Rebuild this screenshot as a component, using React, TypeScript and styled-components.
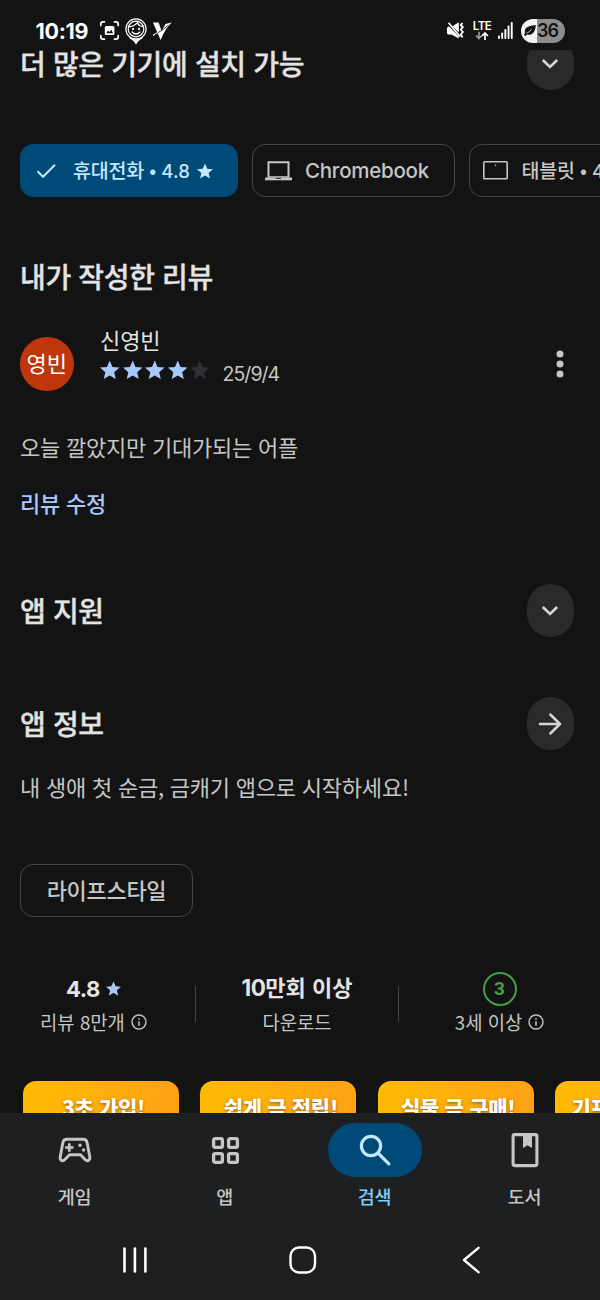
import React from 'react';
import styled, { createGlobalStyle } from 'styled-components';

const GlobalStyle = createGlobalStyle`
  * { box-sizing: border-box; }
  body {
    margin: 0;
    background: #131313;
    color: #e3e3e3;
    font-family: 'Noto Sans CJK KR', sans-serif;
  }
  svg { display: block; flex: none; overflow: visible; }
`;

const LATIN = `Inter, 'Noto Sans CJK KR', sans-serif`;

const Screen = styled.div`
  width: 600px;
  height: 1300px;
  display: flex;
  flex-direction: column;
  overflow: hidden;
`;

const StatusBar = styled.header`
  height: 50px;
  flex: none;
  display: flex;
  align-items: center;
  padding: 11px 35px 0 35.5px;
  color: #fff;
`;

const Clock = styled.span`
  width: 64.5px;
  font: 700 21.5px/24px ${LATIN};
  letter-spacing: -0.3px;
  white-space: nowrap;
`;

const StatusIcons = styled.div`
  display: flex;
  align-items: center;
`;

const StatusRight = styled(StatusIcons)`
  margin-left: auto;
`;

const Network = styled.div`
  width: 20px;
  margin: 0 6px 0 7px;
  display: flex;
  flex-direction: column;
  align-items: center;
  font: 600 11.5px/10px ${LATIN};
  letter-spacing: -0.5px;
`;

const Battery = styled.div`
  width: 44px;
  height: 24px;
  margin-left: 8px;
  border-radius: 12px;
  display: flex;
  align-items: center;
  background: linear-gradient(90deg, #f2f2f2 16px, #8d8d8d 16px);
  color: #131313;
  font: 600 18px/24px ${LATIN};
  letter-spacing: -0.9px;
`;

const Content = styled.main`
  flex: 1;
  min-height: 0;
  overflow: hidden;
`;

const SectionHeader = styled.div<{ $top: number; $h?: number }>`
  height: ${(p) => p.$h ?? 53}px;
  margin-top: ${(p) => p.$top}px;
  padding: 0 26.500px 0 20px;
  display: flex;
  align-items: center;
  justify-content: space-between;
`;

const Heading = styled.h2`
  margin: 0;
  padding-bottom: 2px;
  font-size: 28px;
  line-height: 38px;
  font-weight: 500;
  letter-spacing: -0.35px;
  -webkit-text-stroke: 0.35px currentColor;
  white-space: nowrap;
`;

const RoundButton = styled.button`
  width: 46.5px;
  height: 53px;
  padding: 0;
  border: 0;
  border-radius: 24px;
  display: grid;
  place-items: center;
  background: #282a2c;
  color: #d5d6d5;
`;

const ChipRow = styled.div`
  display: flex;
  gap: 14px;
  margin-top: 54px;
  padding-left: 20px;
`;

const Chip = styled.div<{ $w: number; $pad: number; $selected?: boolean }>`
  flex: none;
  width: ${(p) => p.$w}px;
  height: 53px;
  padding-left: ${(p) => p.$pad}px;
  border-radius: 13px;
  border: 1.5px solid ${(p) => (p.$selected ? '#004a77' : '#444746')};
  background: ${(p) => (p.$selected ? '#004a77' : 'transparent')};
  color: ${(p) => (p.$selected ? '#c2e7ff' : '#c4c7c5')};
  display: flex;
  align-items: center;
  font-size: 19.5px;
  font-weight: 500;
  letter-spacing: -0.2px;
  white-space: nowrap;
`;

const Latin = styled.span<{ $size?: number; $track?: number }>`
  font-family: ${LATIN};
  font-size: ${(p) => (p.$size ? `${p.$size}px` : 'inherit')};
  letter-spacing: ${(p) => p.$track ?? 0}px;
`;

const ChipLabel = styled.span<{ $left: number }>`
  margin-left: ${(p) => p.$left}px;
  margin-right: 7px;
  line-height: 28px;
`;

const Review = styled.div`
  height: 66px;
  margin-top: 28px;
  padding: 0 36px 0 20px;
  display: flex;
  align-items: flex-start;
`;

const Avatar = styled.div`
  width: 53.5px;
  height: 53.5px;
  margin-top: 12px;
  border-radius: 50%;
  background: #bf360c;
  color: #fff;
  text-align: center;
  font-size: 22px;
  line-height: 51px;
`;

const ReviewMeta = styled.div`
  flex: 1;
  margin-left: 26.5px;
`;

const Name = styled.div`
  font-size: 22px;
  line-height: 29px;
  letter-spacing: -0.1px;
`;

const Rating = styled.div`
  display: flex;
  align-items: center;
  gap: 3.1px;
  height: 31px;
`;

const ReviewDate = styled.span`
  margin: 8px 0 0 9.5px;
  color: #c4c7c5;
  font: 400 19.5px/24px ${LATIN};
  letter-spacing: -0.95px;
`;

const MenuButton = styled.div`
  margin-top: 25px;
`;

const Paragraph = styled.p<{ $top: number; $link?: boolean }>`
  margin: ${(p) => p.$top}px 0 0 20px;
  font-size: 22px;
  line-height: 30px;
  letter-spacing: -0.22px;
  font-weight: ${(p) => (p.$link ? 500 : 400)};
  color: ${(p) => (p.$link ? '#a8c7fa' : '#c4c7c5')};
  white-space: nowrap;
`;

const Tag = styled.div`
  width: 173px;
  height: 53px;
  margin: 63px 0 0 20px;
  border: 1.5px solid #444746;
  border-radius: 13px;
  text-align: center;
  color: #c4c7c5;
  font-size: 22px;
  font-weight: 500;
  letter-spacing: -0.3px;
  line-height: 49px;
`;

const Stats = styled.div`
  display: grid;
  grid-template-columns: 196px 203px 201px;
  margin-top: 54px;
  height: 68px;
`;

const Stat = styled.div<{ $shift?: number; $divided?: boolean }>`
  display: flex;
  flex-direction: column;
  align-items: center;
  padding-right: ${(p) => p.$shift ?? 0}px;
  background: ${(p) =>
    p.$divided ? 'linear-gradient(#444746, #444746) right 15px / 1.5px 36px no-repeat' : 'none'};
`;

const StatValue = styled.div`
  height: 35px;
  display: flex;
  align-items: center;
  gap: 6px;
  font-size: 22px;
  line-height: 30px;
  font-weight: 700;
  white-space: nowrap;
`;

const Downloads = styled.span`
  padding-bottom: 3px;
`;

const StatLabel = styled.div`
  height: 32px;
  display: flex;
  align-items: center;
  gap: 6px;
  color: #c4c7c5;
  font-size: 18.8px;
  line-height: 28px;
  white-space: nowrap;
`;

const StatText = styled.span`
  padding-bottom: 1px;
`;

const AgeBadge = styled.div`
  width: 34px;
  height: 34px;
  border: 2.5px solid #43a047;
  border-radius: 50%;
  color: #43a047;
  text-align: center;
  font: 700 19px/30px Roboto, sans-serif;
`;

const Shots = styled.div`
  display: flex;
  gap: 21.3px;
  margin-top: 42px;
  padding-left: 23px;
`;

const Shot = styled.div`
  flex: none;
  width: 156px;
  height: 280px;
  padding: 11px 0 0 5px;
  border-radius: 13px;
  background: linear-gradient(105deg, #ffb905 10%, #ff981c 95%);
  color: #fff;
  text-align: center;
  font-size: 21px;
  line-height: 30px;
  font-weight: 900;
  letter-spacing: -0.3px;
  text-shadow: 0 1px 3px rgba(110, 55, 0, 0.75);
  white-space: nowrap;
`;

const BottomArea = styled.footer`
  flex: none;
  height: 187px;
  background: #1e1f20;
`;

const Tabs = styled.nav`
  display: grid;
  grid-template-columns: repeat(4, 150px);
  padding-top: 10px;
`;

const Tab = styled.div<{ $active?: boolean }>`
  display: flex;
  flex-direction: column;
  align-items: center;
  color: ${(p) => (p.$active ? '#7fcfff' : '#c4c7c5')};
  font-size: 18.5px;
  font-weight: 500;
  letter-spacing: -0.3px;
  line-height: 28px;
`;

const TabLabel = styled.span`
  padding-right: 1px;
`;

const TabIcon = styled.div<{ $active?: boolean }>`
  width: 94px;
  height: 54px;
  margin-bottom: 5px;
  border-radius: 27px;
  display: grid;
  place-items: center;
  background: ${(p) => (p.$active ? '#004a77' : 'transparent')};
  color: ${(p) => (p.$active ? '#c2e7ff' : '#c4c7c5')};
`;

const SystemNav = styled.div`
  display: flex;
  align-items: center;
  height: 40px;
  margin-top: 30px;
  padding-left: 121px;
`;

const Star = ({ size = 19.5, color = 'currentColor' }: { size?: number; color?: string }) => (
  <svg width={size} height={size} viewBox="2 2 20 19" fill={color}>
    <path d="M12 17.27 18.18 21l-1.64-7.03L22 9.24l-7.19-.61L12 2 9.19 8.63 2 9.24l5.46 4.73L5.82 21z" />
  </svg>
);

const Info = () => (
  <svg width="16" height="16" viewBox="0 0 16 16" fill="none" stroke="currentColor" strokeWidth="1.4">
    <circle cx="8" cy="8" r="7" />
    <path d="M8 7.2V11.8M8 4.2V5.8" strokeWidth="1.5" />
  </svg>
);

const ChevronDown = () => (
  <svg width="18" height="12" viewBox="0 0 18 12" fill="none" stroke="currentColor" strokeWidth="2.6">
    <path d="M1.8 2 9 9 16.2 2" />
  </svg>
);

const ArrowRight = () => (
  <svg width="22" height="22" viewBox="0 0 22 22" fill="none" stroke="currentColor" strokeWidth="2.5" strokeLinecap="round" strokeLinejoin="round">
    <path d="M1 11H21M11.3 1.5 21 11 11.3 20.5" />
  </svg>
);

const CaptureIcon = () => (
  <svg width="19" height="19" viewBox="0 0 19 19" fill="none" stroke="#fff" strokeWidth="1.7" strokeLinecap="round">
    <path d="M.8 4.5V3A2.2 2.2 0 0 1 3 .8H4.5M14.5.8H16A2.2 2.2 0 0 1 18.2 3V4.5M18.2 14.5V16A2.2 2.2 0 0 1 16 18.2H14.5M4.5 18.2H3A2.2 2.2 0 0 1 .8 16V14.5" />
    <rect x="4.8" y="5" width="9.6" height="9" rx="1.6" fill="#fff" stroke="none" />
    <path d="M6.3 12.2 8 9.4 9.6 11 11.4 8.7 13 12.2Z" fill="#131313" stroke="none" />
  </svg>
);

const FacePinIcon = () => (
  <svg width="22" height="26" viewBox="0 0 22 26" fill="none" stroke="#fff" strokeWidth="1.2" strokeLinecap="round">
    <circle cx="11" cy="11" r="10.1" />
    <circle cx="11" cy="11" r="7.8" />
    <path d="M4.5 19.5Q9 22 11 25.5 13 22 17.5 19.5 11 22.8 4.5 19.5Z" fill="#fff" />
    <path d="M4.5 8.8Q9 8.5 12.5 4.7 13.5 7.5 17.2 8.7M7 14Q11 18 15 14" />
    <path d="M8 10.8V11.3M14 10.8V11.3" strokeWidth="1.9" />
  </svg>
);

const CheckVIcon = () => (
  <svg width="19" height="18" viewBox="0 0 19 18" fill="#fff">
    <path d="M0 .5H5.600L8.600 9 12.500 2 18.800.5Q12.500 6 7.600 18Z" />
    <path d="M2.500 12Q10 8.500 15.500 3" fill="none" stroke="#131313" strokeWidth=".8" />
    <path d="M0 13.500Q2.500 11.300 5 10.500" fill="none" stroke="#fff" strokeWidth="1.2" />
  </svg>
);

const MuteIcon = () => (
  <svg width="18" height="17" viewBox="0 0 18 17">
    <path d="M0 5.800 2 4.300 11.800 14.500V16.500L4.500 12.500H1.200L0 11.500Z" fill="#fff" />
    <path d="M5.500 4.300 11.800.3V10.600Z" fill="#fff" />
    <path d="M1.500.8 13 14.500" stroke="#fff" strokeWidth="1.700" />
    <path d="M15.500 1 13.800 3 15.800 5 13.800 7.500 15.800 10 13.800 12.500 15.500 15.500" fill="none" stroke="#fff" strokeWidth="1.9" />
  </svg>
);

const DataArrows = () => (
  <svg width="14" height="9" viewBox="0 0 14 9" fill="none" strokeWidth="1.7">
    <path d="M4 .8V7.500M1 4.500 4 7.500 7 4.500" stroke="#999" />
    <path d="M10 9V2M7 5 10 2 13 5" stroke="#fff" />
  </svg>
);

const SignalIcon = () => (
  <svg width="15" height="17" viewBox="0 0 15 17" fill="#fff">
    <rect x="0" y="13.5" width="1.9" height="3.5" rx=".8" />
    <rect x="3.2" y="10.5" width="1.9" height="6.5" rx=".8" />
    <rect x="6.4" y="7" width="1.9" height="10" rx=".8" />
    <rect x="9.6" y="3.5" width="1.9" height="13.5" rx=".8" />
    <rect x="12.8" y="0" width="1.9" height="17" rx=".8" />
  </svg>
);

const Leaf = styled.svg`
  margin: 0 1px 0 3px;
`;

const LeafIcon = () => (
  <Leaf width="12" height="11" viewBox="0 0 12 11">
    <path d="M1 8C0 3 3 1 11.8 0 11.5 7 8 11 3.500 9.500L1 11 0 10Z" fill="#131313" />
    <path d="M2.500 8.300Q5.500 7 7.500 4.500" fill="none" stroke="#f2f2f2" strokeWidth=".8" />
  </Leaf>
);

const CheckIcon = () => (
  <svg width="20" height="16" viewBox="0 0 20 16" fill="none" stroke="currentColor" strokeWidth="2">
    <path d="M1.500 8.300 7 13.800 19 1.800" />
  </svg>
);

const LaptopIcon = () => (
  <svg width="27" height="20" viewBox="0 0 27 20" fill="none" stroke="currentColor" strokeWidth="2">
    <path d="M3.500 16.500V1.200H23.500V16.500" />
    <path d="M0 17.900H27" strokeWidth="2.8" />
    <path d="M11 17.300H16" stroke="#131313" strokeWidth="1" />
    <path d="M3 15.900H24" strokeWidth="1.4" />
  </svg>
);

const TabletIcon = () => (
  <svg width="25" height="19" viewBox="0 0 25 19" fill="none" stroke="currentColor" strokeWidth="1.6">
    <rect x=".8" y=".8" width="23.4" height="17" rx=".8" />
    <circle cx="12.5" cy="4.3" r=".8" fill="currentColor" stroke="none" />
  </svg>
);

const GamepadIcon = () => (
  <svg width="34" height="26" viewBox="0 0 34 26" fill="none" stroke="currentColor" strokeWidth="2.9" strokeLinejoin="round">
    <path d="M9 2.200H25C27.300 2.200 28.700 3.400 29.100 5.500L31.800 20C32.300 23.400 29.300 24.700 27.300 22.800L22.500 17.800H11.500L6.700 22.800C4.700 24.700 1.700 23.400 2.200 20L4.900 5.500C5.300 3.400 6.700 2.200 9 2.200Z" />
    <path d="M11.300 6.300V14.700M7.100 10.500H15.500" strokeWidth="2.7" />
    <circle cx="22" cy="8.2" r="1.7" fill="currentColor" stroke="none" />
    <circle cx="25.6" cy="13" r="1.7" fill="currentColor" stroke="none" />
  </svg>
);

const AppsIcon = () => (
  <svg width="27" height="27" viewBox="0 0 27 27" fill="none" stroke="currentColor" strokeWidth="3.3">
    {[1.6, 16.6].map((y) =>
      [1.6, 16.6].map((x) => <rect key={`${x}-${y}`} x={x} y={y} width="8.8" height="8.8" rx="1.6" />),
    )}
  </svg>
);

const SearchIcon = () => (
  <svg width="32" height="32" viewBox="0 0 32 32" fill="none" stroke="currentColor" strokeWidth="3.2" strokeLinecap="round">
    <circle cx="12" cy="12" r="9.6" />
    <path d="M18.900 18.900 29.800 29.800" />
  </svg>
);

const BookIcon = () => (
  <svg width="28" height="34" viewBox="0 0 28 34">
    <rect x="2.1" y="1.6" width="23.8" height="31" rx="1.5" fill="none" stroke="currentColor" strokeWidth="3.1" />
    <path d="M12 2H21V15L16.500 12.300 12 15Z" fill="currentColor" />
  </svg>
);

const RecentsIcon = () => (
  <svg width="26" height="26" viewBox="0 0 26 26" stroke="#fff" strokeWidth="2.6" strokeLinecap="round">
    <path d="M3.500 1.500V24.500M13.900 1.500V24.500M24.400 1.500V24.500" />
  </svg>
);

const SystemKey = styled.svg<{ $left: number }>`
  margin-left: ${(p) => p.$left}px;
`;

const HomeIcon = () => (
  <SystemKey $left={142} width="28" height="28" viewBox="0 0 28 28" fill="none" stroke="#fff" strokeWidth="2.4">
    <rect x="1.5" y="1.5" width="24.5" height="25" rx="8.5" />
  </SystemKey>
);

const BackIcon = () => (
  <SystemKey $left={144.5} width="18" height="28" viewBox="0 0 18 28" fill="none" stroke="#fff" strokeWidth="2.4" strokeLinecap="round" strokeLinejoin="round">
    <path d="M16.500 1.800 2 14 16.500 26.200" />
  </SystemKey>
);

const NotificationIcons = styled(StatusIcons)`
  gap: 6px;
`;

const tabs = [
  { label: '게임', icon: <GamepadIcon /> },
  { label: '앱', icon: <AppsIcon /> },
  { label: '검색', icon: <SearchIcon />, active: true },
  { label: '도서', icon: <BookIcon /> },
];

const shots = ['3초 가입!', '쉽게 금 적립!', '실물 금 구매!', '기프티콘 교환!'];

export default function App() {
  return (
    <Screen lang="ko">
      <GlobalStyle />
      <StatusBar>
        <Clock>10:19</Clock>
        <NotificationIcons>
          <CaptureIcon />
          <FacePinIcon />
          <CheckVIcon />
        </NotificationIcons>
        <StatusRight>
          <MuteIcon />
          <Network>
            LTE
            <DataArrows />
          </Network>
          <SignalIcon />
          <Battery>
            <LeafIcon />
            36
          </Battery>
        </StatusRight>
      </StatusBar>

      <Content>
        <SectionHeader $top={-13}>
          <Heading>더 많은 기기에 설치 가능</Heading>
          <RoundButton><ChevronDown /></RoundButton>
        </SectionHeader>

        <ChipRow>
          <Chip $w={218} $pad={15} $selected>
            <CheckIcon />
            <ChipLabel $left={17}>휴대전화 • <Latin $size={18.5} $track={0.2}>4.8</Latin></ChipLabel>
            <Star size={16} />
          </Chip>
          <Chip $w={203} $pad={12}>
            <LaptopIcon />
            <ChipLabel $left={13}><Latin $size={20.5} $track={-0.25}>Chromebook</Latin></ChipLabel>
          </Chip>
          <Chip $w={218} $pad={12.5}>
            <TabletIcon />
            <ChipLabel $left={14}>태블릿 • <Latin $size={18.5}>4.8</Latin></ChipLabel>
            <Star size={16} />
          </Chip>
        </ChipRow>

        <SectionHeader $top={60} $h={40}>
          <Heading>내가 작성한 리뷰</Heading>
        </SectionHeader>

        <Review>
          <Avatar>영빈</Avatar>
          <ReviewMeta>
            <Name>신영빈</Name>
            <Rating>
              {[1, 2, 3, 4, 5].map((n) => (
                <Star key={n} color={n < 5 ? '#a8c7fa' : '#303134'} />
              ))}
              <ReviewDate>25/9/4</ReviewDate>
            </Rating>
          </ReviewMeta>
          <MenuButton>
            <svg width="8" height="28" viewBox="0 0 8 28" fill="#c4c7c5">
              <circle cx="4" cy="4" r="3.5" />
              <circle cx="4" cy="14" r="3.5" />
              <circle cx="4" cy="24" r="3.5" />
            </svg>
          </MenuButton>
        </Review>

        <Paragraph $top={40}>오늘 깔았지만 기대가되는 어플</Paragraph>
        <Paragraph $top={26} $link>리뷰 수정</Paragraph>

        <SectionHeader $top={67}>
          <Heading>앱 지원</Heading>
          <RoundButton><ChevronDown /></RoundButton>
        </SectionHeader>

        <SectionHeader $top={60}>
          <Heading>앱 정보</Heading>
          <RoundButton><ArrowRight /></RoundButton>
        </SectionHeader>

        <Paragraph $top={21}>내 생애 첫 순금, 금캐기 앱으로 시작하세요!</Paragraph>

        <Tag>라이프스타일</Tag>

        <Stats>
          <Stat $shift={9} $divided>
            <StatValue><Latin $size={22} $track={-0.4}>4.8</Latin><Star size={15} color="#a8c7fa" /></StatValue>
            <StatLabel><StatText>리뷰 8만개</StatText><Info /></StatLabel>
          </Stat>
          <Stat $shift={1} $divided>
            <StatValue><Downloads><Latin $size={22.5} $track={-0.6}>10</Latin>만회 이상</Downloads></StatValue>
            <StatLabel><StatText>다운로드</StatText></StatLabel>
          </Stat>
          <Stat>
            <StatValue><AgeBadge>3</AgeBadge></StatValue>
            <StatLabel><StatText>3세 이상</StatText><Info /></StatLabel>
          </Stat>
        </Stats>

        <Shots>
          {shots.map((s) => <Shot key={s}>{s}</Shot>)}
        </Shots>
      </Content>

      <BottomArea>
        <Tabs>
          {tabs.map((t) => (
            <Tab key={t.label} $active={t.active}>
              <TabIcon $active={t.active}>{t.icon}</TabIcon>
              <TabLabel>{t.label}</TabLabel>
            </Tab>
          ))}
        </Tabs>
        <SystemNav>
          <RecentsIcon />
          <HomeIcon />
          <BackIcon />
        </SystemNav>
      </BottomArea>
    </Screen>
  );
}
